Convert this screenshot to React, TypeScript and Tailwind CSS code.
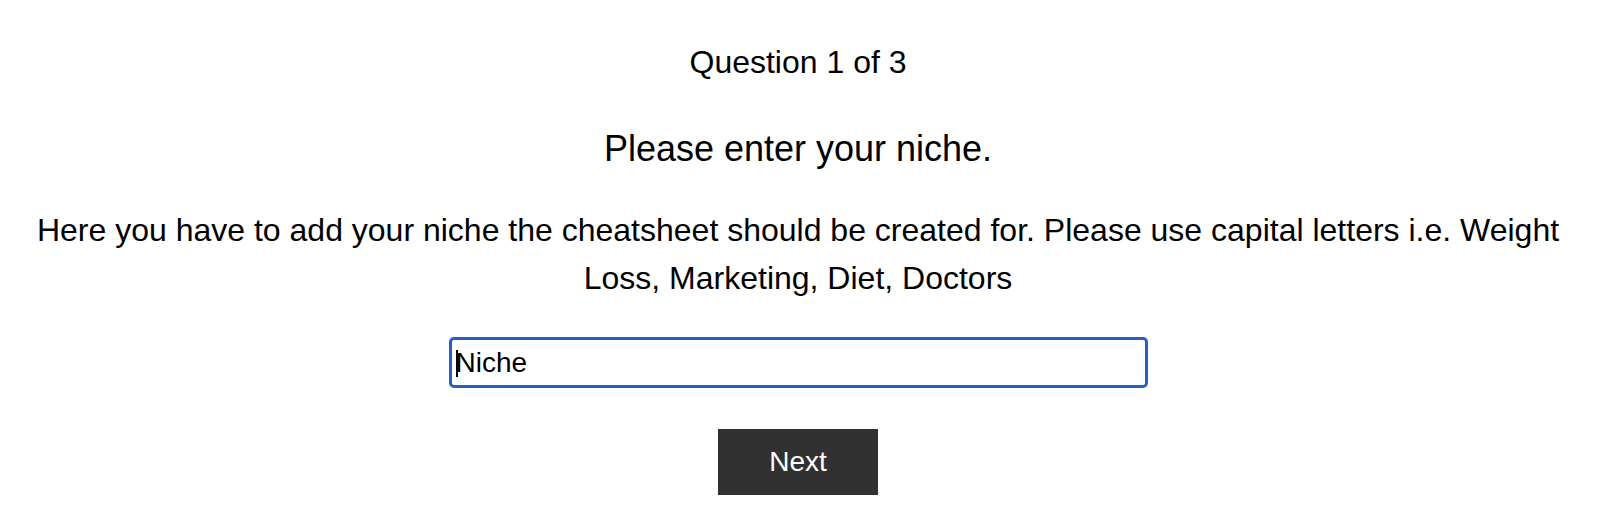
import React from "react";

export default function App() {
  return (
    <div
      className="w-[1600px] h-[524px] bg-white text-black flex flex-col items-center pl-[18px] pr-[22px] pt-[38px]"
      style={{ fontFamily: '"Liberation Sans", Arial, sans-serif' }}
    >
      <div className="text-[32px] leading-[48px]">Question 1 of 3</div>
      <div className="text-[36px] leading-[54px] mt-[36px]">Please enter your niche.</div>
      <p className="text-[32px] leading-[48px] mt-[30px] text-center">
        Here you have to add your niche the cheatsheet should be created for. Please use capital letters i.e. Weight Loss, Marketing, Diet, Doctors
      </p>
      <div className="relative mt-[35px] w-[699px] h-[51px] rounded-[5px] border-[3px] border-[#2660c6] bg-white flex items-center pl-[4px]">
        <input
          className="w-full h-full outline-none bg-transparent text-[28px] text-black"
          style={{ fontFamily: '"Liberation Sans", Arial, sans-serif' }}
          defaultValue="Niche"
          readOnly
        />
        <span className="absolute left-[4px] top-[10px] w-[2px] h-[27px] bg-black" />
      </div>
      <button className="mt-[41px] w-[160px] h-[66px] bg-[#313131] text-white text-[28px] flex items-center justify-center">
        Next
      </button>
    </div>
  );
}
